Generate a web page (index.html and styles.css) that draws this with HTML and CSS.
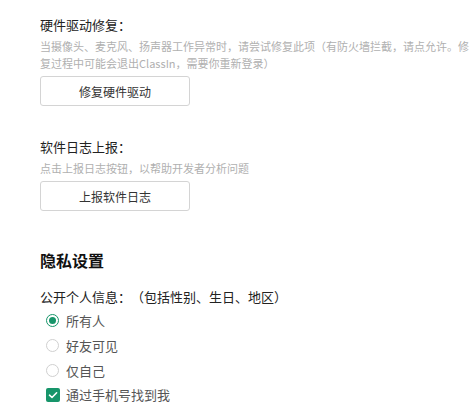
FILE: index.html
```html
<!DOCTYPE html>
<html lang="zh-CN">
<head>
<meta charset="utf-8">
<link rel="stylesheet" href="styles.css">
</head>
<body>
<div class="page">
  <section class="block">
    <div class="title">硬件驱动修复：</div>
    <div class="desc">当摄像头、麦克风、扬声器工作异常时，请尝试修复此项（有防火墙拦截，请点允许。修复过程中可能会退出ClassIn，需要你重新登录）</div>
    <button class="btn">修复硬件驱动</button>
  </section>
  <section class="block block-second">
    <div class="title">软件日志上报：</div>
    <div class="desc">点击上报日志按钮，以帮助开发者分析问题</div>
    <button class="btn">上报软件日志</button>
  </section>
  <h2 class="heading">隐私设置</h2>
  <div class="field-label">公开个人信息：（包括性别、生日、地区）</div>
  <div class="options">
    <label class="option"><span class="radio checked"></span><span class="opt-text">所有人</span></label>
    <label class="option"><span class="radio"></span><span class="opt-text">好友可见</span></label>
    <label class="option"><span class="radio"></span><span class="opt-text">仅自己</span></label>
    <label class="option option-check"><span class="checkbox"><svg width="14" height="14" viewBox="0 0 14 14"><path d="M3.5 7.2 L6 9.5 L10.6 4.8" fill="none" stroke="#fff" stroke-width="1.6" stroke-linecap="round" stroke-linejoin="round"/></svg></span><span class="opt-text">通过手机号找到我</span></label>
  </div>
</div>
</body>
</html>
```
FILE: styles.css
```css
* { box-sizing: border-box; }
html, body { margin: 0; padding: 0; background: #fff; }
body {
  font-family: "Noto Sans CJK SC", "Microsoft YaHei", sans-serif;
  color: #333;
  text-spacing-trim: space-all;
}
.page {
  padding: 15px 0 0 40px;
  width: 475px;
}
.block { display: flex; flex-direction: column; align-items: flex-start; }
.block-second { margin-top: 31px; }
.title {
  font-size: 13px;
  line-height: 20px;
  color: #222;
}
.desc {
  margin-top: 3px;
  font-size: 11px;
  line-height: 17px;
  color: #b0b0b0;
}
.btn {
  margin-top: 4px;
  width: 150px;
  height: 30px;
  border: 1px solid #d4d4d4;
  border-radius: 3px;
  background: #fff;
  font-family: inherit;
  font-size: 12px;
  color: #333;
  padding: 0;
}
.heading {
  margin: 38px 0 0;
  font-size: 16px;
  line-height: 22px;
  font-weight: bold;
  color: #111;
}
.field-label {
  margin-top: 16px;
  font-size: 13px;
  line-height: 20px;
  color: #222;
}
.options { display: flex; flex-direction: column; margin-top: 1px; }
.option {
  display: flex;
  align-items: center;
  height: 25px;
  padding-left: 6px;
}
.option-check { height: 24px; }
.radio {
  width: 13px;
  height: 13px;
  border: 1px solid #d0d0d0;
  border-radius: 50%;
  display: flex;
  align-items: center;
  justify-content: center;
  flex: none;
}
.radio.checked { border: 1.5px solid #17956a; }
.radio.checked::after {
  content: "";
  width: 7px;
  height: 7px;
  border-radius: 50%;
  background: #17956a;
}
.checkbox {
  width: 14px;
  height: 14px;
  border-radius: 2px;
  background: #17956a;
  display: flex;
  flex: none;
}
.opt-text {
  margin-left: 7px;
  font-size: 13px;
  line-height: 20px;
  color: #555;
}
.option-check .opt-text { margin-left: 6px; }
```
